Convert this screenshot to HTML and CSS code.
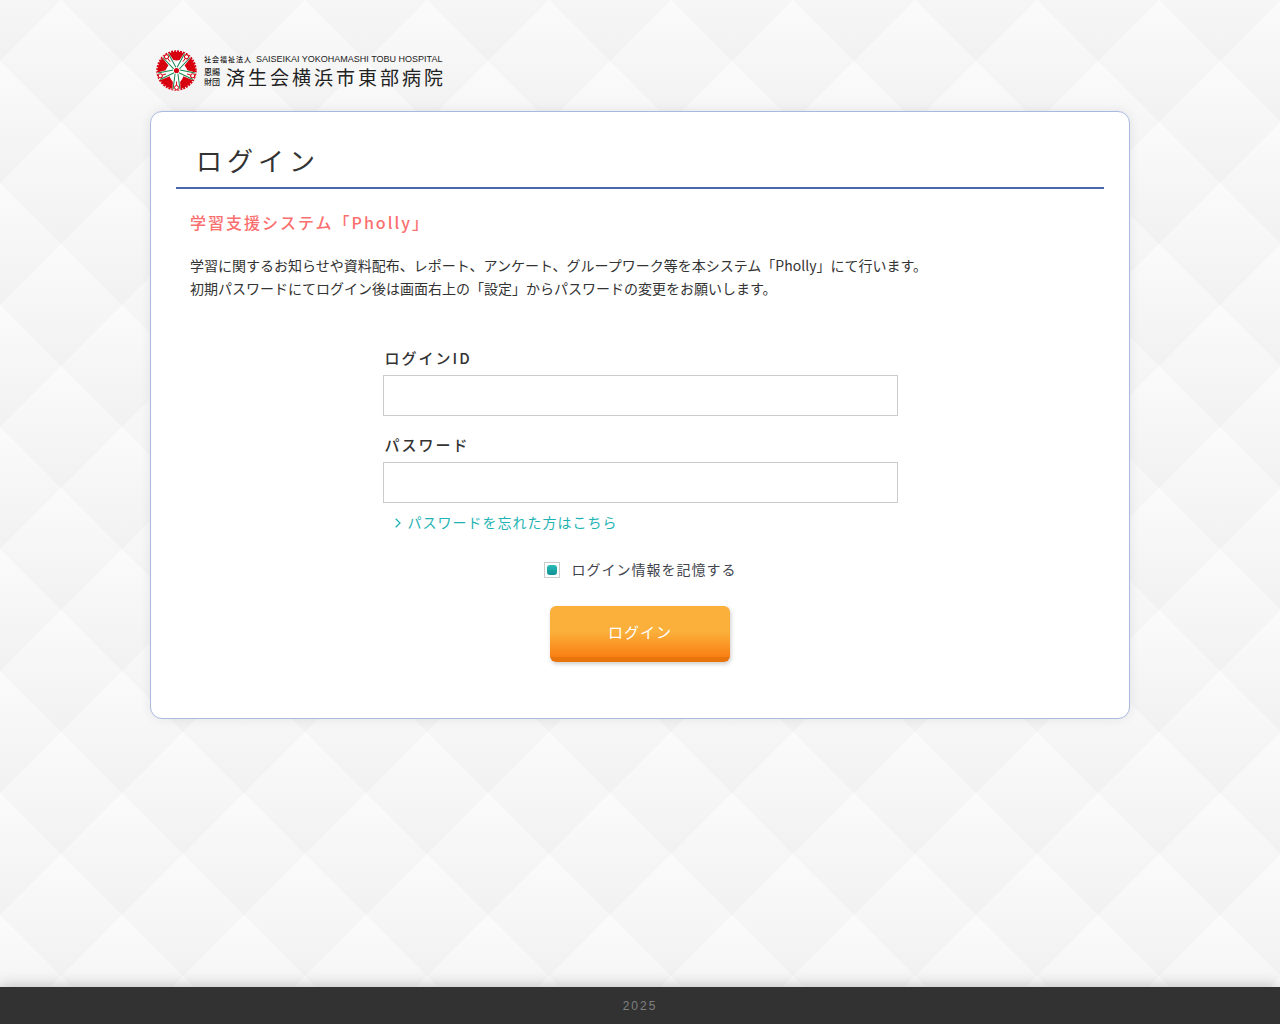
FILE: index.html
```
<!DOCTYPE html>
<html lang="ja">
<head>
    <meta charset="UTF-8">
    <meta name="viewport" content="width=device-width, initial-scale=1.0">
    <title>ログイン</title>
    <link rel="stylesheet" href="styles.css">
</head>
<body>
    <div class="wrapper">
        <header class="logo">
            <svg class="logo-mark" viewBox="-20.5 -20.5 41 41" aria-hidden="true">
                <defs>
                    <!-- one of the five stems between the petals -->
                    <g id="stem">
                        <path d="M-2 1 L-3.6 10 L-4 19 L4 19 L3.6 10 L2 1 Z" fill="#fff"/>
                        <path d="M-1.4 3 L-3.4 18.5 M1.4 3 L3.4 18.5" fill="none" stroke="#16864c" stroke-width="1"/>
                        <path d="M0 11 V15" stroke="#d7000f" stroke-width="0.9"/>
                        <circle cy="17" r="2" fill="#fff" stroke="#d7000f" stroke-width="1"/>
                    </g>
                </defs>
                <circle r="18.8" fill="#d7000f"/>
                <circle r="19.2" fill="none" stroke="#d7000f" stroke-width="2" stroke-dasharray="2 1.016"/>
                <path d="M0 -10 L3 -10.5 L6 -8 L9.5 -3 L11 0 L8 3 L6 8 L4 11 L-4 11 L-6 8 L-8 3 L-11 0 L-9.5 -3 L-6 -8 L-3 -10.5 Z" fill="#fff"/>
                <use href="#stem"/>
                <use href="#stem" transform="rotate(72)"/>
                <use href="#stem" transform="rotate(144)"/>
                <use href="#stem" transform="rotate(216)"/>
                <use href="#stem" transform="rotate(288)"/>
                <circle r="2.6" fill="#d7000f"/>
            </svg>
            <div class="logo-text">
                <div class="logo-top"><span class="logo-corp">社会福祉法人</span><span class="logo-en">SAISEIKAI YOKOHAMASHI TOBU HOSPITAL</span></div>
                <div class="logo-bottom">
                    <span class="logo-small">恩賜<br>財団</span>
                    <span class="logo-name">済生会横浜市東部病院</span>
                </div>
            </div>
        </header>

        <main class="card">
            <h1 class="title">ログイン</h1>
            <div class="intro">
                <h2 class="system-name">学習支援システム「Pholly」</h2>
                <p>学習に関するお知らせや資料配布、レポート、アンケート、グループワーク等を本システム「Pholly」にて行います。<br>初期パスワードにてログイン後は画面右上の「設定」からパスワードの変更をお願いします。</p>
            </div>

            <form class="login-form">
                <div class="field">
                    <label for="login-id">ログインID</label>
                    <input type="text" id="login-id" name="login_id">
                </div>
                <div class="field">
                    <label for="password">パスワード</label>
                    <input type="password" id="password" name="password">
                </div>
                <a href="#" class="forgot">
                    <svg class="arrow" viewBox="0 0 6 10" aria-hidden="true"><path d="M0.7 0.7 L5 5 L0.7 9.3"/></svg>パスワードを忘れた方はこちら
                </a>
                <label class="remember">
                    <input type="checkbox" name="remember" checked>
                    ログイン情報を記憶する
                </label>
                <button type="submit" class="button">ログイン</button>
            </form>
        </main>
    </div>

    <footer class="footer">2025</footer>
</body>
</html>
```
FILE: styles.css
```
* {
    box-sizing: border-box;
}
body {
    margin: 0;
    min-height: 100vh;
    display: flex;
    flex-direction: column;
    color: #333;
    font-family: "Noto Sans CJK JP", sans-serif;
    font-size: 14px;
    line-height: 23px;
    /* diamond pattern, each diamond fades from light to dark */
    background-color: #f6f6f6;
    background-image:
        url("data:image/svg+xml,%3Csvg xmlns='http://www.w3.org/2000/svg' width='122' height='122'%3E%3Cdefs%3E%3ClinearGradient id='g' x1='0' y1='0' x2='0' y2='1'%3E%3Cstop offset='0' stop-color='%23fbfbfb'/%3E%3Cstop offset='1' stop-color='%23f1f1f1'/%3E%3C/linearGradient%3E%3C/defs%3E%3Cpath d='M61 0L122 61L61 122L0 61Z' fill='url(%23g)'/%3E%3C/svg%3E"),
        linear-gradient(#f6f6f6, #f1f1f1 50%, #fbfbfb 50%, #f6f6f6);
    background-size: 122px 122px;
}
.wrapper {
    flex: 1;
    width: 100%;
    max-width: 980px;
    margin: 0 auto;
    padding: 50px 0 40px;
}

/* logo */
.logo {
    display: flex;
    align-items: center;
    gap: 7px;
    margin: 0 6px 20px;
}
.logo-mark {
    width: 41px;
    height: 41px;
}
.logo-text {
    padding-top: 2px;
    color: #222;
    white-space: nowrap;
}
.logo-top {
    display: flex;
    gap: 4px;
    font-size: 7px;
    font-weight: 500;
    line-height: 10px;
}
.logo-corp {
    letter-spacing: 1px;
}
.logo-en {
    font-family: "Liberation Sans", sans-serif;
    font-size: 9px;
    font-weight: 400;
}
.logo-bottom {
    display: flex;
    align-items: center;
    gap: 6px;
}
.logo-small {
    font-size: 8px;
    font-weight: 500;
    line-height: 10px;
}
.logo-name {
    font-size: 19px;
    line-height: 26px;
    letter-spacing: 3px;
}

/* card */
.card {
    padding: 28px 25px 56px;
    background: #fff;
    border: 1px solid #a9b9e0;
    border-radius: 12px;
    box-shadow: 0 0 12px rgba(0, 0, 0, 0.08);
}
.title {
    margin: 0;
    padding: 0 20px 7px;
    border-bottom: 2px solid #4767ac;
    font-size: 26px;
    font-weight: 400;
    line-height: 40px;
    letter-spacing: 5px;
}
.intro {
    padding: 21px 14px 0;
}
.intro p {
    margin: 0;
}
.system-name {
    margin: 0 0 20px;
    color: #fb6f6f;
    font-size: 16px;
    font-weight: 500;
    line-height: 24px;
    letter-spacing: 2px;
}

/* form */
.login-form {
    display: flex;
    flex-direction: column;
    width: 100%;
    max-width: 515px;
    margin: 46px auto 0;
}
.field {
    margin-bottom: 17px;
}
.field label {
    display: block;
    padding: 0 2px 6px;
    font-size: 15px;
    font-weight: 500;
    letter-spacing: 2px;
}
.field input {
    display: block;
    width: 100%;
    height: 41px;
    padding: 0 10px;
    border: 1px solid #ccc;
    background: #fff;
    font: inherit;
}
.forgot {
    display: flex;
    align-items: center;
    gap: 7px;
    margin: -9px 0 24px 12px;
    color: #1fb3b3;
    letter-spacing: 1px;
    text-decoration: none;
}
.arrow {
    width: 6px;
    height: 10px;
    fill: none;
    stroke: #1fb3b3;
    stroke-width: 1.3;
}
.remember {
    display: flex;
    align-items: center;
    align-self: center;
    gap: 12px;
    color: #3f454d;
    letter-spacing: 1px;
}
.remember input {
    appearance: none;
    width: 16px;
    height: 16px;
    margin: 0;
    padding: 2px;
    border: 1px solid #ccc;
    background: #fff;
}
.remember input:checked::before {
    content: "";
    display: block;
    height: 10px;
    border-radius: 3px;
    background: linear-gradient(#2abdb8, #0f8f94);
}
.button {
    align-self: center;
    width: 180px;
    height: 56px;
    margin-top: 25px;
    padding: 0;
    border: none;
    border-bottom: 5px solid #e8740c;
    border-radius: 6px;
    background: linear-gradient(#fbb03b, #fbb03b 50%, #f97f12);
    box-shadow: 1px 2px 4px rgba(0, 0, 0, 0.2);
    color: #fff;
    font: inherit;
    font-size: 15px;
    letter-spacing: 1px;
    cursor: pointer;
}

.footer {
    padding: 8px 0 6px;
    background: #323232;
    box-shadow: 0 0 16px rgba(0, 0, 0, 0.25);
    color: #808080;
    font-family: "Liberation Sans", sans-serif;
    font-size: 12px;
    letter-spacing: 2px;
    text-align: center;
}
```
